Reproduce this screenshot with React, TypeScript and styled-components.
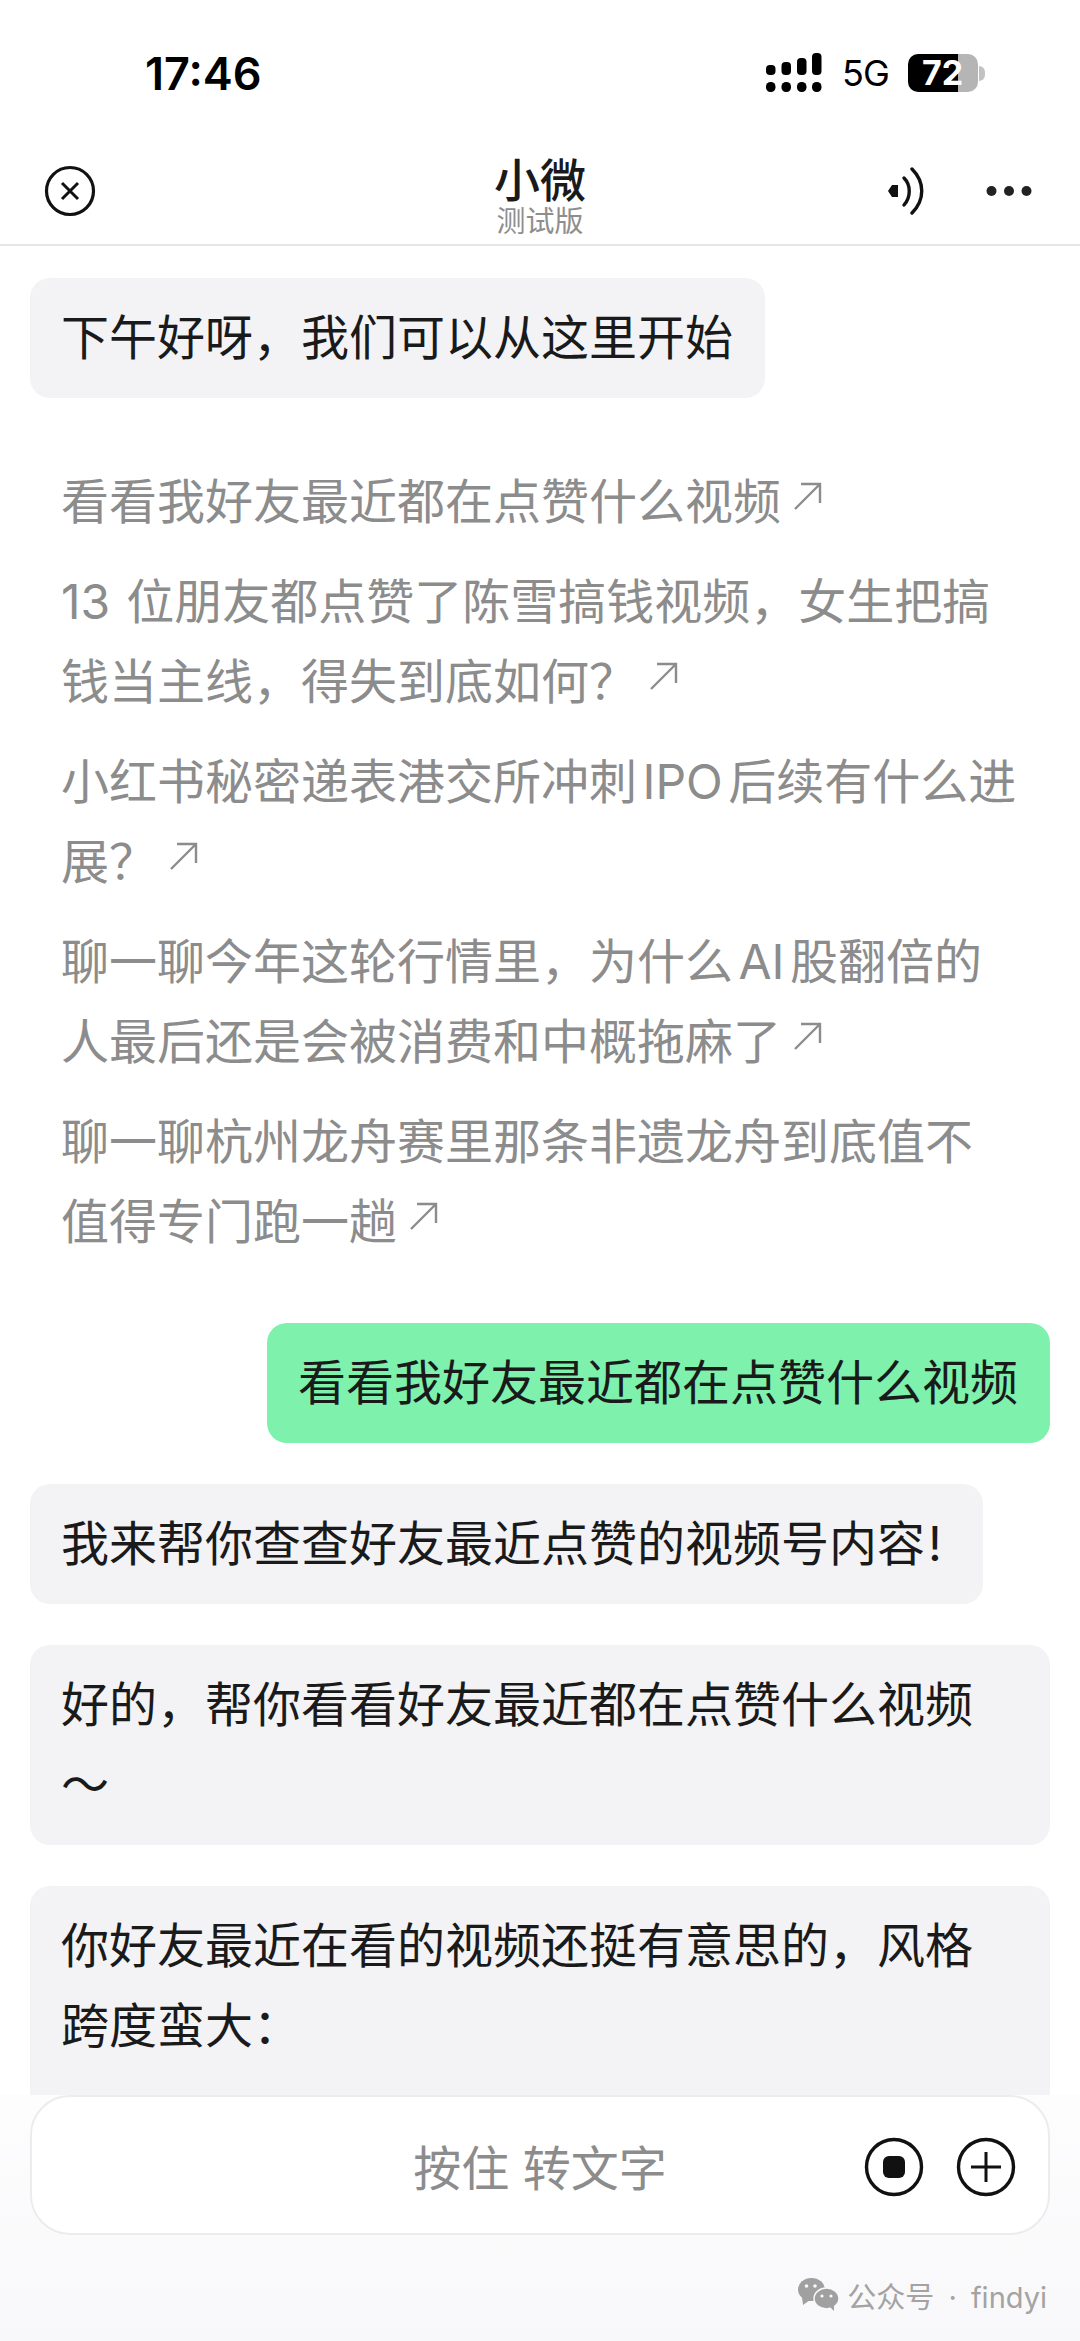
import { createGlobalStyle, styled } from "styled-components";

const GlobalStyle = createGlobalStyle`
  html, body {
    margin: 0;
    padding: 0;
    background: #fff;
  }
  * {
    box-sizing: border-box;
  }
`;

const suggestions = [
  ["看看我好友最近都在点赞什么视频"],
  ["13\u2004位朋友都点赞了陈雪搞钱视频，女生把搞", "钱当主线，得失到底如何？"],
  ["小红书秘密递表港交所冲刺 IPO 后续有什么进", "展？"],
  ["聊一聊今年这轮行情里，为什么 AI 股翻倍的", "人最后还是会被消费和中概拖麻了"],
  ["聊一聊杭州龙舟赛里那条非遗龙舟到底值不", "值得专门跑一趟"],
];

const Arrow = () => (
  <ArrowIcon viewBox="0 0 30 30" fill="none" stroke="#8c8c8c" strokeWidth="2.4">
    <path d="M2 28 L27 3 M8 3 H27 V22" />
  </ArrowIcon>
);

const App = () => {
  return (
    <Page>
      <GlobalStyle />
      <StatusBar>
        <Clock>17:46</Clock>
        <StatusIcons>
          <svg width="56" height="40" viewBox="0 0 56 40" fill="#000">
            <rect x="0" y="12" width="9.5" height="10" rx="4" />
            <rect x="15.5" y="9" width="9.5" height="13" rx="4" />
            <rect x="31" y="5" width="9.5" height="17" rx="4" />
            <rect x="46" y="0" width="9.5" height="22" rx="4" />
            <rect x="0" y="29" width="9.5" height="10" rx="4.5" />
            <rect x="15.5" y="29" width="9.5" height="10" rx="4.5" />
            <rect x="31" y="29" width="9.5" height="10" rx="4.5" />
            <rect x="46" y="29" width="9.5" height="10" rx="4.5" />
          </svg>
          <Network>5G</Network>
          <Battery>
            <BatteryText>72</BatteryText>
            <BatteryCap />
          </Battery>
        </StatusIcons>
      </StatusBar>

      <NavBar>
        <svg width="52" height="52" viewBox="0 0 52 52" fill="none" stroke="#111" strokeWidth="3.2">
          <circle cx="26" cy="26" r="23.5" />
          <path d="M18 18 L34 34 M34 18 L18 34" strokeWidth="3" />
        </svg>
        <NavTitle>
          <TitleMain>小微</TitleMain>
          <TitleSub>测试版</TitleSub>
        </NavTitle>
        <NavActions>
          <svg width="37" height="48" viewBox="0 0 37 48" fill="none" stroke="#111" strokeWidth="3.4" strokeLinecap="round">
            <path d="M0 24 L4 18 L10 18 V30 L4 30 Z" fill="#111" stroke="none" />
            <path d="M16 11 C23 18 23 30 16 38" />
            <path d="M24 2 C37 15 37 33 24 46" />
          </svg>
          <svg width="46" height="12" viewBox="0 0 46 12" fill="#222">
            <circle cx="5.5" cy="6" r="5" />
            <circle cx="23" cy="6" r="5" />
            <circle cx="40.5" cy="6" r="5" />
          </svg>
        </NavActions>
      </NavBar>

      <Chat>
        <Bubble>下午好呀，我们可以从这里开始</Bubble>

        <SuggestionList>
          {suggestions.map((lines) => (
            <Suggestion key={lines[0]}>
              {lines.map((line, i) => (
                <span key={line}>
                  {line}
                  {i < lines.length - 1 ? <br /> : <Arrow />}
                </span>
              ))}
            </Suggestion>
          ))}
        </SuggestionList>

        <MineBubble>看看我好友最近都在点赞什么视频</MineBubble>
        <Bubble>
          我来帮你查查好友最近点赞的视频号内容<Exclaim>!</Exclaim>
        </Bubble>
        <Bubble $full>
          好的，帮你看看好友最近都在点赞什么视频
          <br />～
        </Bubble>
        <Bubble $full>
          你好友最近在看的视频还挺有意思的，风格
          <br />
          跨度蛮大：
          <br />
          <br />
        </Bubble>
      </Chat>

      <Bottom>
        <InputBar>
          <Hint>按住 转文字</Hint>
          <InputActions>
            <svg width="60" height="60" viewBox="0 0 60 60" fill="none" stroke="#111" strokeWidth="3.4">
              <circle cx="30" cy="30" r="27.5" />
              <rect x="19" y="19" width="22" height="22" rx="6" fill="#111" stroke="none" />
            </svg>
            <svg width="60" height="60" viewBox="0 0 60 60" fill="none" stroke="#111" strokeWidth="3.4">
              <circle cx="30" cy="30" r="27.5" />
              <path d="M30 15 V45 M15 30 H45" strokeWidth="3" />
            </svg>
          </InputActions>
        </InputBar>
        <Watermark>
          <svg width="41" height="34" viewBox="0 0 41 34" fill="#a0a0a0">
            <ellipse cx="13.5" cy="11.5" rx="13.5" ry="11.5" />
            <path d="M4 19 L5 27 L12 22 Z" />
            <ellipse cx="28.5" cy="20.5" rx="12.5" ry="10.5" stroke="#f9f9fb" strokeWidth="1.5" />
            <path d="M32 29 L36 33 L36 27 Z" />
            <circle cx="8.5" cy="8" r="1.8" fill="#f9f9fb" />
            <circle cx="17" cy="8" r="1.8" fill="#f9f9fb" />
            <circle cx="24" cy="18" r="1.6" fill="#f9f9fb" />
            <circle cx="33" cy="18" r="1.6" fill="#f9f9fb" />
          </svg>
          <WatermarkText>公众号 · findyi</WatermarkText>
        </Watermark>
      </Bottom>
    </Page>
  );
};

const fontStack = `"Inter", "Noto Sans CJK SC", sans-serif`;

const Page = styled.div`
  width: 1080px;
  height: 2341px;
  position: relative;
  overflow: hidden;
  background: #fff;
  font-family: ${fontStack};
  color: #1a1a1a;
`;

const StatusBar = styled.div`
  height: 132px;
  padding: 14px 102px 0 145px;
  display: flex;
  align-items: center;
  justify-content: space-between;
`;

const Clock = styled.div`
  font-size: 45px;
  font-weight: 600;
  color: #000;
`;

const StatusIcons = styled.div`
  display: flex;
  align-items: center;
  gap: 20px;
`;

const Network = styled.div`
  font-size: 36px;
  font-weight: 400;
  color: #000;
  width: 46px;
  letter-spacing: -1px;
`;

const Battery = styled.div`
  width: 70px;
  height: 38px;
  border-radius: 10px;
  background: linear-gradient(90deg, #000 0 50px, #b5b5b5 50px);
  position: relative;
  display: flex;
  align-items: center;
`;

const BatteryText = styled.div`
  width: 100%;
  padding-left: 14px;
  font-size: 34px;
  font-weight: 700;
  color: #fff;
  line-height: 38px;
`;

const BatteryCap = styled.div`
  position: absolute;
  left: 71px;
  top: 12px;
  width: 6px;
  height: 15px;
  border-radius: 0 7px 7px 0;
  background: #c2c2c2;
`;

const NavBar = styled.div`
  height: 114px;
  padding: 5px 48px 0 44px;
  display: flex;
  align-items: center;
  justify-content: space-between;
  position: relative;
  border-bottom: 2px solid #e6e6e6;
`;

const NavTitle = styled.div`
  position: absolute;
  left: 0;
  right: 0;
  top: 22px;
  display: flex;
  flex-direction: column;
  align-items: center;
`;

const TitleMain = styled.div`
  font-size: 46px;
  font-weight: 500;
  line-height: 52px;
  color: #1a1a1a;
`;

const TitleSub = styled.div`
  font-size: 29px;
  line-height: 32px;
  color: #8e8e8e;
`;

const NavActions = styled.div`
  display: flex;
  align-items: center;
  gap: 61px;
`;

const Chat = styled.div`
  padding: 32px 30px 0;
  display: flex;
  flex-direction: column;
  align-items: flex-start;
  gap: 41px;
`;

const Bubble = styled.div<{ $full?: boolean }>`
  width: ${(p) => (p.$full ? "100%" : "auto")};
  padding: 20px 32px 20px 31px;
  border-radius: 20px;
  background: #f3f3f5;
  font-size: 48px;
  line-height: 80px;
  color: #1a1a1a;
`;

const MineBubble = styled(Bubble)`
  align-self: flex-end;
  background: #7ef1ad;
`;

const Exclaim = styled.span`
  margin: 0 9px 0 3px;
`;

const SuggestionList = styled.div`
  padding: 0 31px;
  margin-top: 23px;
  margin-bottom: 20px;
  display: flex;
  flex-direction: column;
  gap: 20px;
`;

const Suggestion = styled.div`
  font-size: 48px;
  line-height: 80px;
  color: #8c8c8c;
  white-space: nowrap;
  word-spacing: -8px;
`;

const ArrowIcon = styled.svg`
  width: 30px;
  height: 30px;
  margin-left: 12px;
  vertical-align: 8px;
`;

const Bottom = styled.div`
  position: absolute;
  left: 0;
  right: 0;
  bottom: 0;
  height: 246px;
  padding: 0 33px 0 30px;
  display: flex;
  flex-direction: column;
  background: linear-gradient(180deg, #fdfdfe 0%, #f8f8fa 100%);
`;

const InputBar = styled.div`
  width: 1020px;
  height: 140px;
  border: 2px solid #ececec;
  border-radius: 40px;
  background: #fff;
  position: relative;
  display: flex;
  align-items: center;
  justify-content: center;
`;

const Hint = styled.div`
  font-size: 48px;
  color: #8c8c8c;
`;

const InputActions = styled.div`
  position: absolute;
  right: 32px;
  top: 40px;
  display: flex;
  gap: 32px;
`;

const Watermark = styled.div`
  margin-top: 39px;
  align-self: flex-end;
  display: flex;
  align-items: center;
  gap: 8px;
`;

const WatermarkText = styled.div`
  font-size: 29px;
  color: #a3a3a3;
  word-spacing: 6px;
`;

export default App;
